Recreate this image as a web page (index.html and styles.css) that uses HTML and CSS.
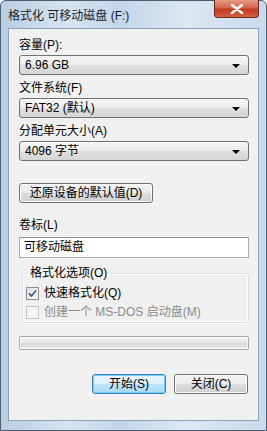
FILE: index.html
```html
<!DOCTYPE html>
<html lang="zh-CN">
<head>
    <meta charset="UTF-8">
    <meta name="viewport" content="width=device-width, initial-scale=1.0">
    <title>格式化 可移动磁盘 (F:)</title>
    <link rel="stylesheet" href="styles.css">
</head>
<body>
    <div class="window">
        <div class="titlebar">
            <span class="title">格式化 可移动磁盘 (F:)</span>
            <button class="close">
                <svg width="14" height="10" viewBox="0 0 14 10">
                    <path d="M2 1 L12 9 M12 1 L2 9" stroke="#fff" stroke-width="2.4" stroke-linecap="round"/>
                </svg>
            </button>
        </div>

        <div class="client">
            <p class="label">容量(P):</p>
            <div class="combo"><span>6.96 GB</span><i class="arrow"></i></div>

            <p class="label">文件系统(F)</p>
            <div class="combo"><span>FAT32 (默认)</span><i class="arrow"></i></div>

            <p class="label">分配单元大小(A)</p>
            <div class="combo"><span>4096 字节</span><i class="arrow"></i></div>

            <button class="btn restore">还原设备的默认值(D)</button>

            <p class="label vol">卷标(L)</p>
            <div class="textbox">可移动磁盘</div>

            <fieldset class="group">
                <legend>格式化选项(O)</legend>
                <div class="check">
                    <span class="box checked">
                        <svg width="9" height="9" viewBox="0 0 9 9">
                            <path d="M1 4.5 L3.5 7 L8 1.5" fill="none" stroke="#4a5f8a" stroke-width="1.8"/>
                        </svg>
                    </span>
                    <span>快速格式化(Q)</span>
                </div>
                <div class="check disabled">
                    <span class="box"></span>
                    <span>创建一个 MS-DOS 启动盘(M)</span>
                </div>
            </fieldset>

            <div class="progress"></div>

            <div class="actions">
                <button class="btn default">开始(S)</button>
                <button class="btn">关闭(C)</button>
            </div>
        </div>
    </div>
</body>
</html>
```

FILE: styles.css
```css
*{
    margin: 0;
    padding: 0;
    box-sizing: border-box;
}

body{
    width: 267px;
    height: 431px;
    overflow: hidden;
    font-family: "Liberation Sans", "Noto Sans CJK SC", sans-serif;
    font-size: 12px;
    color: #000;
    background: #fff;
}

.window{
    width: 267px;
    height: 431px;
    border: 1px solid #4b5d70;
    border-radius: 6px 6px 0 0;
    background: linear-gradient(90deg, #b9cee3 0%, #d6e4f1 25%, #c3d6ea 45%, #dce8f3 70%, #c8daec 100%);
    padding: 0 7px 9px;
    display: flex;
    flex-direction: column;
}

.titlebar{
    height: 27px;
    display: flex;
    align-items: flex-start;
}

.title{
    margin-top: 8px;
    color: #1e1e1e;
    font-size: 12px;
    line-height: 15px;
}

.close{
    margin-left: auto;
    margin-right: 0;
    width: 45px;
    height: 18px;
    border: 1px solid #6b2a22;
    border-top: none;
    border-radius: 0 0 4px 4px;
    background: linear-gradient(#e39a86 0%, #d5654c 45%, #c23a20 55%, #d2603f 100%);
    display: flex;
    align-items: center;
    justify-content: center;
    margin-top: -1px;
}

.client{
    flex-grow: 1;
    background-color: #f0f0f0;
    border: 1px solid #8fa3b8;
    padding: 9px 9px 0 10px;
    display: flex;
    flex-direction: column;
}

.label{
    line-height: 15px;
    height: 15px;
    margin-bottom: 2px;
}

.combo{
    height: 20px;
    border: 1px solid #707070;
    border-radius: 3px;
    background: linear-gradient(#f6f6f6 0%, #ececec 50%, #dfdfdf 51%, #d6d6d6 100%);
    display: flex;
    align-items: center;
    padding: 0 8px 0 5px;
    margin-bottom: 6px;
}

.combo span{
    flex-grow: 1;
    line-height: 15px;
}

.arrow{
    width: 0;
    height: 0;
    border-left: 4px solid transparent;
    border-right: 4px solid transparent;
    border-top: 4px solid #000;
    margin-top: 2px;
}

.btn{
    font-family: "Liberation Sans", "Noto Sans CJK SC", sans-serif;
    font-size: 12px;
    color: #000;
    height: 20px;
    border: 1px solid #707070;
    border-radius: 3px;
    background: linear-gradient(#f2f2f2 0%, #ebebeb 50%, #dddddd 51%, #cfcfcf 100%);
    box-shadow: inset 0 0 0 1px #fbfbfb;
    line-height: 16px;
}

.restore{
    width: 134px;
    margin-top: 16px;
    margin-bottom: 15px;
}

.textbox{
    height: 21px;
    border: 1px solid #abadb3;
    border-top-color: #8e9199;
    background-color: #fff;
    padding: 0 4px;
    line-height: 19px;
    margin-top: 2px;
}

.group{
    margin: 8px 0 0 3px;
    border: 1px solid #d5dfe5;
    border-radius: 3px;
    box-shadow: inset 0 0 0 1px #fff, 0 1px 0 #fff;
    padding: 3px 0 3px 3px;
    height: 57px;
}

.group legend{
    padding: 0 3px 0 2px;
    margin-left: 2px;
    line-height: 15px;
}

.check{
    display: flex;
    align-items: center;
    gap: 5px;
    height: 19px;
    line-height: 15px;
}

.box{
    width: 13px;
    height: 13px;
    border: 1px solid #8e8f8f;
    background: linear-gradient(135deg, #dcdcdc, #fdfdfd);
    display: flex;
    align-items: center;
    justify-content: center;
}

.disabled{
    color: #8d8d8d;
}

.disabled .box{
    border-color: #c5c5c5;
    background: #f4f4f4;
}

.progress{
    height: 14px;
    margin-top: 13px;
    border: 1px solid #a9a9a9;
    border-radius: 2px;
    background: linear-gradient(#f4f4f4 0%, #e6e6e6 45%, #d9d9d9 55%, #e9e9e9 100%);
    box-shadow: inset 0 0 0 1px #fafafa;
}

.actions{
    display: flex;
    justify-content: flex-end;
    gap: 8px;
    margin-top: 24px;
    padding-right: 1px;
}

.actions .btn{
    width: 74px;
}

.default{
    border-color: #3c7fb1;
    background: linear-gradient(#eaf6fd 0%, #d9f0fc 50%, #bee6fd 51%, #a7d9f5 100%);
    box-shadow: inset 0 0 0 1px #6fd1fb;
}
```
